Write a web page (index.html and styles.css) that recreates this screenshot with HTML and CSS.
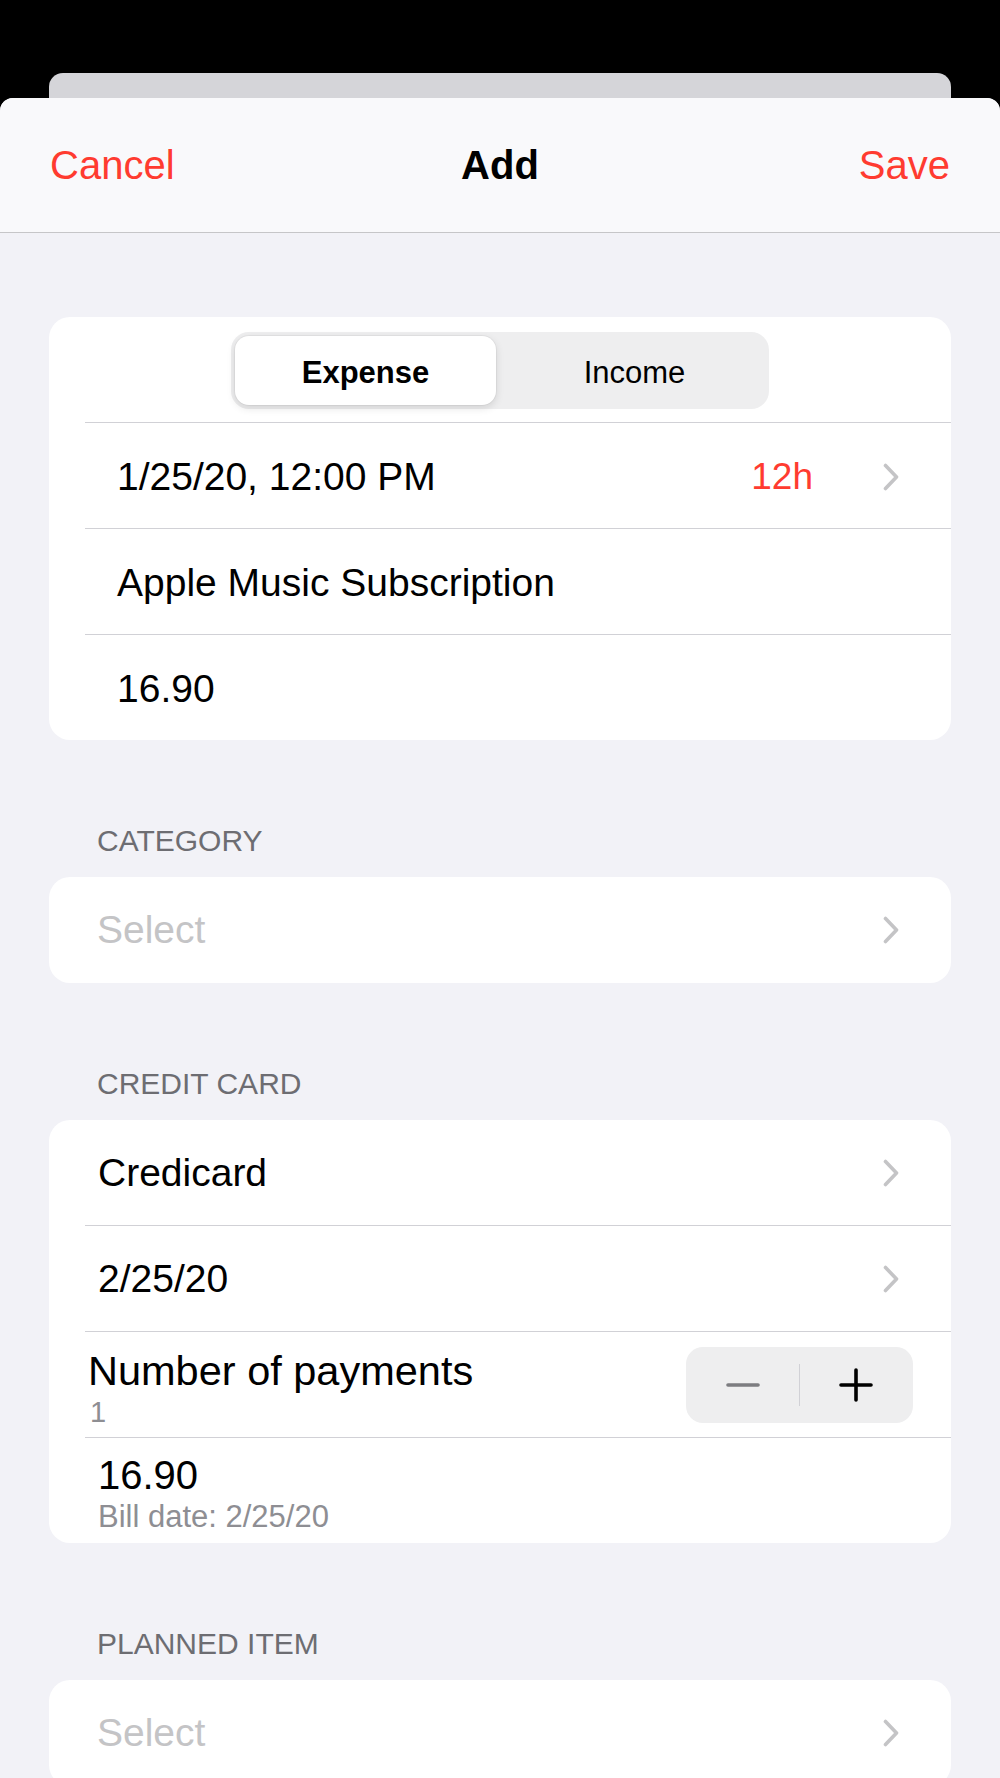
FILE: index.html
```html
<!DOCTYPE html>
<html lang="en">
<head>
    <meta charset="UTF-8">
    <meta name="viewport" content="width=device-width, initial-scale=1.0">
    <title>Add</title>
    <link rel="stylesheet" href="styles.css">
</head>
<body>
    <div class="screen">
        <div class="back-card"></div>
        <div class="sheet">
            <header class="nav">
                <span class="nav-btn">Cancel</span>
                <span class="nav-title">Add</span>
                <span class="nav-btn nav-save">Save</span>
            </header>

            <main class="content">
                <div class="card card-main">
                    <div class="segment-row">
                        <div class="segment">
                            <div class="seg active">Expense</div>
                            <div class="seg">Income</div>
                        </div>
                    </div>
                    <div class="row">
                        <span class="row-label">1/25/20, 12:00 PM</span>
                        <span class="row-value">12h</span>
                        <svg class="chevron" viewBox="0 0 16 28"><polyline points="2.5,2.5 13.5,14 2.5,25.5"/></svg>
                    </div>
                    <div class="row">
                        <span class="row-label">Apple Music Subscription</span>
                    </div>
                    <div class="row">
                        <span class="row-label">16.90</span>
                    </div>
                </div>

                <h3 class="section-title">CATEGORY</h3>
                <div class="card">
                    <div class="select-row">
                        <span class="row-label placeholder">Select</span>
                        <svg class="chevron" viewBox="0 0 16 28"><polyline points="2.5,2.5 13.5,14 2.5,25.5"/></svg>
                    </div>
                </div>

                <h3 class="section-title">CREDIT CARD</h3>
                <div class="card card-credit">
                    <div class="row row-first">
                        <span class="row-label">Credicard</span>
                        <svg class="chevron" viewBox="0 0 16 28"><polyline points="2.5,2.5 13.5,14 2.5,25.5"/></svg>
                    </div>
                    <div class="row">
                        <span class="row-label">2/25/20</span>
                        <svg class="chevron" viewBox="0 0 16 28"><polyline points="2.5,2.5 13.5,14 2.5,25.5"/></svg>
                    </div>
                    <div class="row row-stepper">
                        <div class="stack">
                            <span class="stack-title">Number of payments</span>
                            <span class="stack-sub">1</span>
                        </div>
                        <div class="stepper">
                            <svg class="step-icon minus" viewBox="0 0 34 34"><line x1="2" y1="17" x2="32" y2="17"/></svg>
                            <span class="step-divider"></span>
                            <svg class="step-icon plus" viewBox="0 0 34 34"><line x1="2" y1="17" x2="32" y2="17"/><line x1="17" y1="2" x2="17" y2="32"/></svg>
                        </div>
                    </div>
                    <div class="row row-bill">
                        <div class="stack">
                            <span class="bill-amount">16.90</span>
                            <span class="bill-date">Bill date: 2/25/20</span>
                        </div>
                    </div>
                </div>

                <h3 class="section-title">PLANNED ITEM</h3>
                <div class="card">
                    <div class="select-row">
                        <span class="row-label placeholder">Select</span>
                        <svg class="chevron" viewBox="0 0 16 28"><polyline points="2.5,2.5 13.5,14 2.5,25.5"/></svg>
                    </div>
                </div>
            </main>
        </div>
    </div>
</body>
</html>
```

FILE: styles.css
```css
* {
    box-sizing: border-box;
}

html, body {
    margin: 0;
    padding: 0;
}

body {
    background-color: #000;
    font-family: "Liberation Sans", Arial, sans-serif;
    color: #000;
}

.screen {
    height: 1778px;
    overflow: hidden;
    display: flex;
    flex-direction: column;
}

.back-card {
    margin: 73px 49px 0;
    height: 25px;
    flex-shrink: 0;
    background-color: #d5d5d9;
    border-radius: 14px 14px 0 0;
}

.sheet {
    flex: 1;
    background-color: #f2f2f7;
    border-radius: 13px 13px 0 0;
    overflow: hidden;
}

/* navigation bar */
.nav {
    height: 135px;
    background-color: #f9f9fb;
    border-bottom: 1px solid #c6c6c8;
    display: grid;
    grid-template-columns: 1fr auto 1fr;
    align-items: center;
    padding: 0 50px;
    font-size: 40px;
}

.nav-btn {
    color: #ff3b30;
}

.nav-save {
    justify-self: end;
}

.nav-title {
    font-weight: bold;
}

.content {
    padding: 84px 49px 0;
}

.card {
    background-color: #fff;
    border-radius: 21px;
    overflow: hidden;
}

/* segmented control */
.segment-row {
    height: 105px;
    display: flex;
    justify-content: center;
    align-items: center;
    padding-top: 2px;
}

.segment {
    width: 538px;
    height: 77px;
    padding: 4px;
    display: flex;
    gap: 8px;
    background-color: #eeeeef;
    border-radius: 18px;
}

.seg {
    flex: 1;
    display: flex;
    align-items: center;
    justify-content: center;
    padding-top: 4px;
    font-size: 31px;
    border-radius: 14px;
}

.seg.active {
    background-color: #fff;
    font-weight: bold;
    box-shadow: 0 3px 8px rgba(0, 0, 0, 0.12), 0 0 0 1px rgba(0, 0, 0, 0.04);
}

/* rows */
.row {
    margin-left: 36px;
    height: 106px;
    border-top: 1px solid #d1d1d6;
    display: flex;
    align-items: center;
    padding-right: 52px;
    font-size: 39px;
}

.row-first {
    height: 105px;
    border-top: none;
}

.card-main .row {
    padding-left: 32px;
    padding-top: 3px;
}

.card-credit .row {
    padding-left: 13px;
}

.row-label {
    flex: 1;
}

.row-value {
    color: #ff3b30;
    font-size: 37px;
    margin-right: 70px;
}

.chevron {
    width: 16px;
    height: 28px;
    flex-shrink: 0;
}

.chevron polyline {
    fill: none;
    stroke: #c4c4c6;
    stroke-width: 3.6;
    stroke-linecap: round;
    stroke-linejoin: round;
}

.select-row {
    height: 106px;
    display: flex;
    align-items: center;
    padding: 0 52px 0 48px;
    font-size: 39px;
}

.placeholder {
    color: #c4c4c6;
}

.section-title {
    margin: 83px 0 18px;
    padding-left: 48px;
    font-size: 30px;
    line-height: 36px;
    font-weight: normal;
    color: #6d6d72;
}

/* stepper row */
.card-credit .row-stepper {
    padding-left: 3px;
    padding-right: 38px;
    align-items: flex-start;
}

.stack {
    flex: 1;
    display: flex;
    flex-direction: column;
}

.row-stepper .stack {
    padding-top: 16px;
}

.stack-title {
    font-size: 41.5px;
    line-height: 46px;
}

.stack-sub {
    font-size: 29px;
    line-height: 36px;
    color: #8e8e93;
    padding-left: 2px;
}

.stepper {
    align-self: center;
    width: 227px;
    height: 76px;
    background-color: #eeeeef;
    border-radius: 17px;
    display: flex;
    align-items: center;
    justify-content: space-around;
    padding: 0 20px;
}

.step-icon {
    width: 34px;
    height: 34px;
}

.step-icon line {
    stroke-width: 3.6;
    stroke-linecap: round;
}

.minus line {
    stroke: #7c7c80;
}

.plus line {
    stroke: #000;
}

.step-divider {
    width: 1.5px;
    height: 42px;
    background-color: #d1d1d6;
}

/* bill row */
.row-bill {
    align-items: flex-start;
}

.row-bill .stack {
    padding-top: 14px;
}

.bill-amount {
    font-size: 40px;
    line-height: 46px;
}

.bill-date {
    font-size: 31px;
    line-height: 38px;
    color: #8e8e93;
}
```
